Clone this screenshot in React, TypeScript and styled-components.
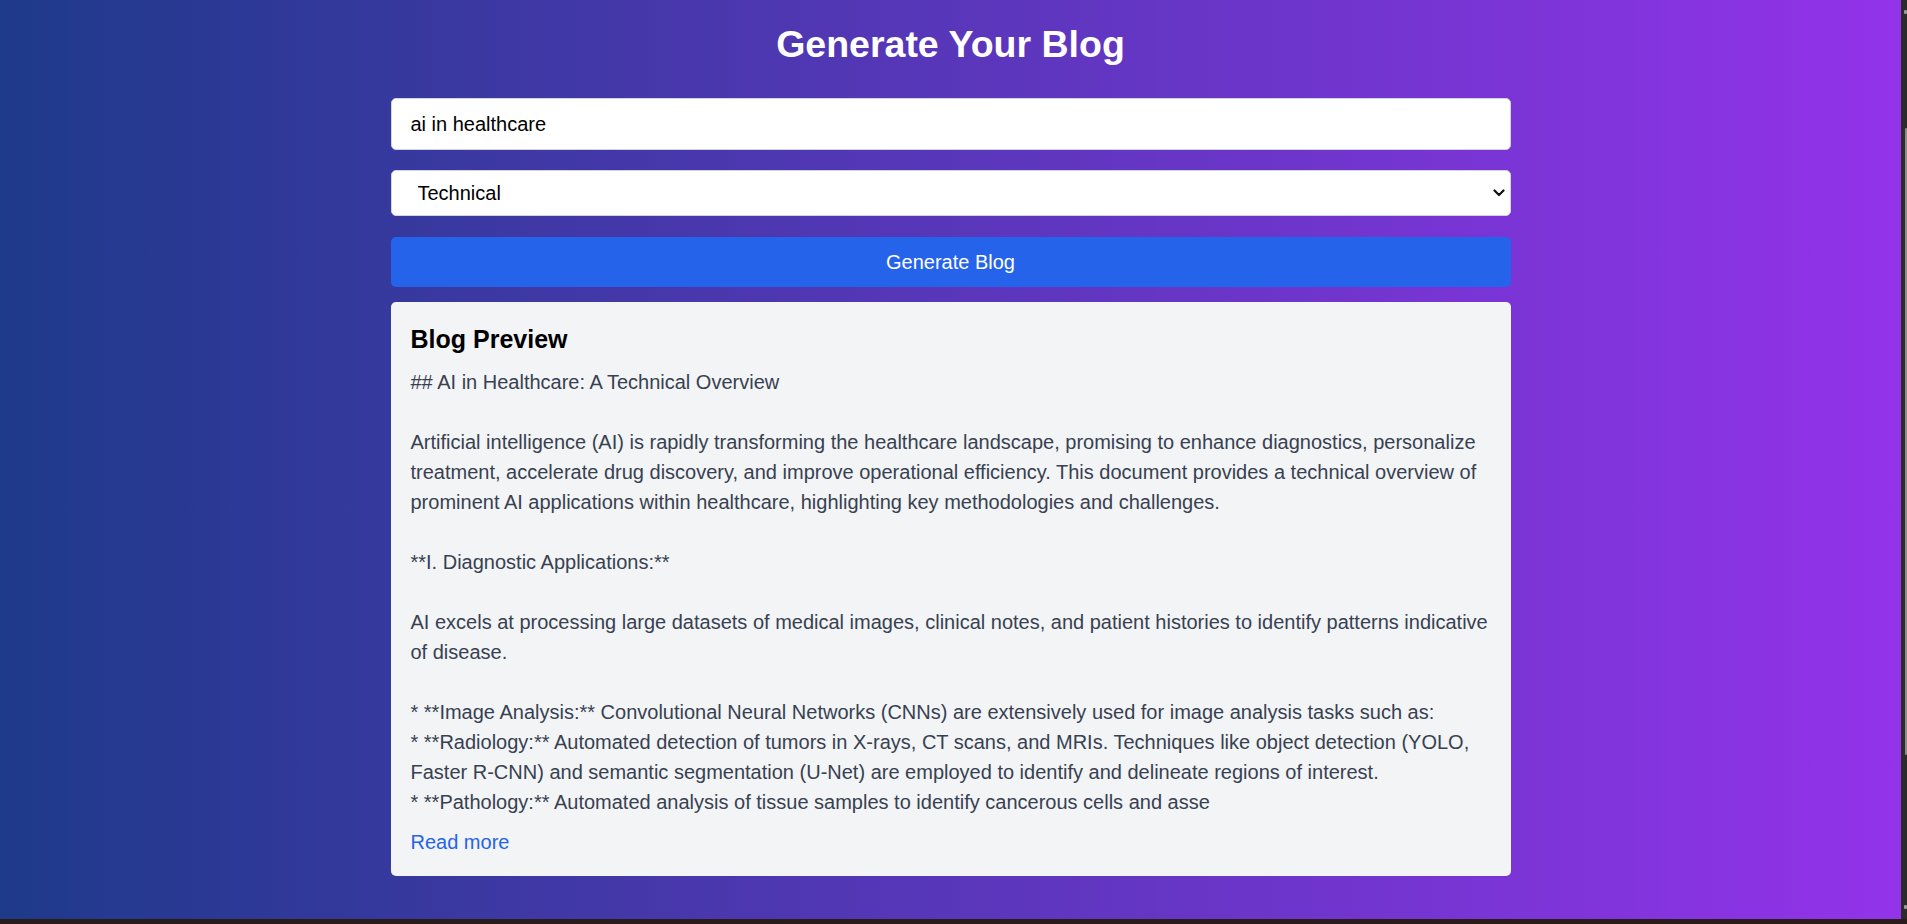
import React from "react";
import styled, { createGlobalStyle } from "styled-components";

const GlobalStyle = createGlobalStyle`
  html, body {
    margin: 0;
    padding: 0;
    height: 100%;
    overflow: hidden;
    background: #261b1b;
  }
  * { box-sizing: border-box; }
`;

const Frame = styled.div`
  display: flex;
  flex-direction: column;
  width: 1907px;
  height: 924px;
`;

const Viewport = styled.div`
  display: flex;
  flex-direction: row;
  height: 919px;
`;

const Page = styled.main`
  flex: 1;
  display: flex;
  flex-direction: column;
  align-items: center;
  padding-top: 22px;
  background: linear-gradient(to right, #1e3a8a, #9333ea);
  font-family: "Liberation Sans", Arial, sans-serif;
`;

const ScrollTrack = styled.div`
  width: 6px;
  background: #2b2b2b;
  display: flex;
  flex-direction: column;
  align-items: flex-end;
  padding: 10px 0;
`;

const ScrollArrow = styled.div`
  width: 3px;
  height: 4px;
  background: #9a9a9a;
  border-radius: 1px;
`;

const ScrollThumb = styled.div`
  width: 2px;
  flex: 1;
  margin: 114px 0 150px;
  background: #8c8c8c;
  border-radius: 1px;
`;

const BottomBar = styled.div`
  height: 5px;
  background: #2a1c1b;
`;

const Title = styled.h1`
  margin: 0 0 31px;
  font-size: 37.5px;
  line-height: 45px;
  font-weight: 700;
  color: #ffffff;
  text-align: center;
`;

const Form = styled.div`
  width: 1120px;
  display: flex;
  flex-direction: column;
`;

const TopicInput = styled.input`
  height: 52px;
  width: 100%;
  padding: 0 19px;
  border: 1px solid #d1d5db;
  border-radius: 5px;
  background: #ffffff;
  font-family: inherit;
  font-size: 20px;
  color: #000;
  outline: none;
  margin-bottom: 20px;
`;

const SelectWrap = styled.div`
  position: relative;
  margin-bottom: 21px;
`;

const StyleSelect = styled.select`
  appearance: none;
  -webkit-appearance: none;
  width: 100%;
  height: 46px;
  padding: 0 26px;
  border: 1px solid #d1d5db;
  border-radius: 5px;
  background: #ffffff;
  font-family: inherit;
  font-size: 20px;
  color: #000;
  outline: none;
`;

const Chevron = styled.svg`
  position: absolute;
  right: 6px;
  top: 19px;
  width: 12px;
  height: 8px;
  pointer-events: none;
`;

const GenerateButton = styled.button`
  height: 50px;
  width: 100%;
  border: none;
  border-radius: 5px;
  background: #2563eb;
  color: #ffffff;
  font-family: inherit;
  font-size: 20px;
  cursor: pointer;
  margin-bottom: 15px;
`;

const PreviewCard = styled.section`
  background: #f3f4f6;
  border-radius: 5px;
  padding: 20px 20px 19px;
  display: flex;
  flex-direction: column;
  align-items: flex-start;
`;

const PreviewTitle = styled.h2`
  margin: 0 0 10px;
  font-size: 25px;
  line-height: 35px;
  font-weight: 700;
  color: #000;
`;

const PreviewBody = styled.div`
  white-space: pre-line;
  font-size: 20px;
  line-height: 30px;
  color: #374151;
`;

const ReadMore = styled.button`
  margin-top: 10px;
  padding: 0;
  border: none;
  background: none;
  font-family: inherit;
  font-size: 20px;
  line-height: 30px;
  color: #2563eb;
  cursor: pointer;
`;

const blogText = `## AI in Healthcare: A Technical Overview

Artificial intelligence (AI) is rapidly transforming the healthcare landscape, promising to enhance diagnostics, personalize treatment, accelerate drug discovery, and improve operational efficiency. This document provides a technical overview of prominent AI applications within healthcare, highlighting key methodologies and challenges.

**I. Diagnostic Applications:**

AI excels at processing large datasets of medical images, clinical notes, and patient histories to identify patterns indicative of disease.

* **Image Analysis:** Convolutional Neural Networks (CNNs) are extensively used for image analysis tasks such as:
* **Radiology:** Automated detection of tumors in X-rays, CT scans, and MRIs. Techniques like object detection (YOLO, Faster R-CNN) and semantic segmentation (U-Net) are employed to identify and delineate regions of interest.
* **Pathology:** Automated analysis of tissue samples to identify cancerous cells and asse`;

export default function App() {
  return (
    <>
      <GlobalStyle />
      <Frame>
        <Viewport>
          <Page>
            <Title>Generate Your Blog</Title>
            <Form>
              <TopicInput defaultValue="ai in healthcare" />
              <SelectWrap>
                <StyleSelect defaultValue="Technical">
                  <option>Casual</option>
                  <option>Technical</option>
                  <option>Professional</option>
                </StyleSelect>
                <Chevron viewBox="0 0 12 8">
                  <polyline
                    points="1.5,1.5 6,6 10.5,1.5"
                    fill="none"
                    stroke="#111"
                    strokeWidth="2.2"
                    strokeLinecap="round"
                    strokeLinejoin="round"
                  />
                </Chevron>
              </SelectWrap>
              <GenerateButton>Generate Blog</GenerateButton>
              <PreviewCard>
                <PreviewTitle>Blog Preview</PreviewTitle>
                <PreviewBody>{blogText}</PreviewBody>
                <ReadMore>Read more</ReadMore>
              </PreviewCard>
            </Form>
          </Page>
          <ScrollTrack>
            <ScrollArrow />
            <ScrollThumb />
            <ScrollArrow />
          </ScrollTrack>
        </Viewport>
        <BottomBar />
      </Frame>
    </>
  );
}
